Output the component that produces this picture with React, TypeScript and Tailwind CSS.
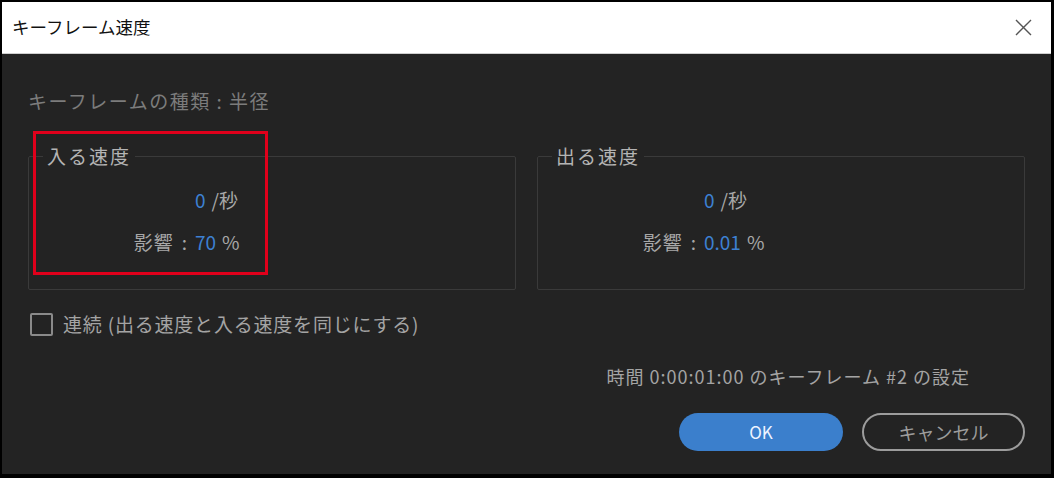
import React, { useState } from 'react';

const FONT = { fontFamily: '"Noto Sans CJK JP", "Noto Sans", sans-serif' };

interface SpeedPanel {
  title: string;
  speed: string;
  influence: string;
}

const panels: SpeedPanel[] = [
  { title: '入る速度', speed: '0', influence: '70' },
  { title: '出る速度', speed: '0', influence: '0.01' },
];

// パネル（fieldset + legend）
const SpeedFieldset: React.FC<{ panel: SpeedPanel }> = ({ panel }) => (
  <fieldset className="border border-[#3a3a3a] rounded-[2px] pt-[18px] pb-[33px]">
    <legend className="ml-[14px] px-[4px] text-[19px] leading-[24px] tracking-[2px] text-[#b4b4b4]">
      {panel.title}
    </legend>
    <div className="flex flex-col gap-[14px] text-[19px] leading-[28px]">
      <div className="flex">
        <span className="w-[158px] shrink-0" />
        <span className="ml-[8px] text-[#3d80d2]">{panel.speed}</span>
        <span className="ml-[6px] text-[#a8a8a8]">/秒</span>
      </div>
      <div className="flex">
        <span className="w-[158px] shrink-0 flex justify-end text-[#a8a8a8]">
          <span className="tracking-[1px]">影響</span>
          <span className="ml-[8px]">:</span>
        </span>
        <span className="ml-[8px] text-[#3d80d2]">{panel.influence}</span>
        <span className="ml-[6px] text-[#a8a8a8]">%</span>
      </div>
    </div>
  </fieldset>
);

export default function App() {
  const [linked, setLinked] = useState(false);

  return (
    <div
      className="relative w-[1054px] h-[478px] flex flex-col bg-black border-t-2 border-l-2 border-r-[3px] border-b-4 border-black overflow-hidden"
      style={FONT}
    >
      {/* タイトルバー */}
      <div className="h-[52px] shrink-0 bg-white flex items-center justify-between pl-[10px] pr-[19px] border-b border-[#cfcfcf]">
        <span className="text-[17.5px] text-[#111]">キーフレーム速度</span>
        <svg width="17" height="17" viewBox="0 0 17 17" className="text-[#555]">
          <path d="M1 1 L16 16 M16 1 L1 16" stroke="currentColor" strokeWidth="1.4" fill="none" />
        </svg>
      </div>

      {/* 本体 */}
      <div className="flex-1 bg-[#232323] px-[26px] flex flex-col">
        <p className="mt-[34px] text-[19px] leading-[26px] tracking-[1.5px] text-[#7c7c7c]">
          キーフレームの種類 : 半径
        </p>

        <div className="mt-[30px] grid grid-cols-2 gap-[21px]">
          {panels.map((p) => (
            <SpeedFieldset key={p.title} panel={p} />
          ))}
        </div>

        <label className="mt-[20px] flex items-center gap-[10px] cursor-pointer">
          <span
            onClick={() => setLinked(!linked)}
            className="w-[23px] h-[23px] ml-[2px] border-2 border-[#8a8a8a] rounded-[2px] flex items-center justify-center"
          >
            {linked && <span className="w-[11px] h-[11px] bg-[#8a8a8a]" />}
          </span>
          <span className="text-[19px] leading-[28px] tracking-[0.8px] text-[#a4a4a4]">
            連続 (出る速度と入る速度を同じにする)
          </span>
        </label>

        <div className="mt-[24px] flex justify-end pr-[55px]">
          <span className="text-[18px] leading-[28px] tracking-[1px] text-[#a4a4a4]">
            時間 0:00:01:00 のキーフレーム #2 の設定
          </span>
        </div>

        <div className="mt-[23px] flex justify-end gap-[19px]">
          <button className="w-[164px] h-[38px] rounded-full bg-[#3b7fcc] text-[17px] text-[#eef4ff]">
            OK
          </button>
          <button className="w-[163px] h-[38px] rounded-full border-2 border-[#9c9c9c] text-[18px] text-[#9c9c9c]">
            キャンセル
          </button>
        </div>
      </div>

      {/* 注釈の赤枠 */}
      <div className="absolute left-[31px] top-[129px] w-[235px] h-[144px] border-[3px] border-[#e0001b]" />
    </div>
  );
}
